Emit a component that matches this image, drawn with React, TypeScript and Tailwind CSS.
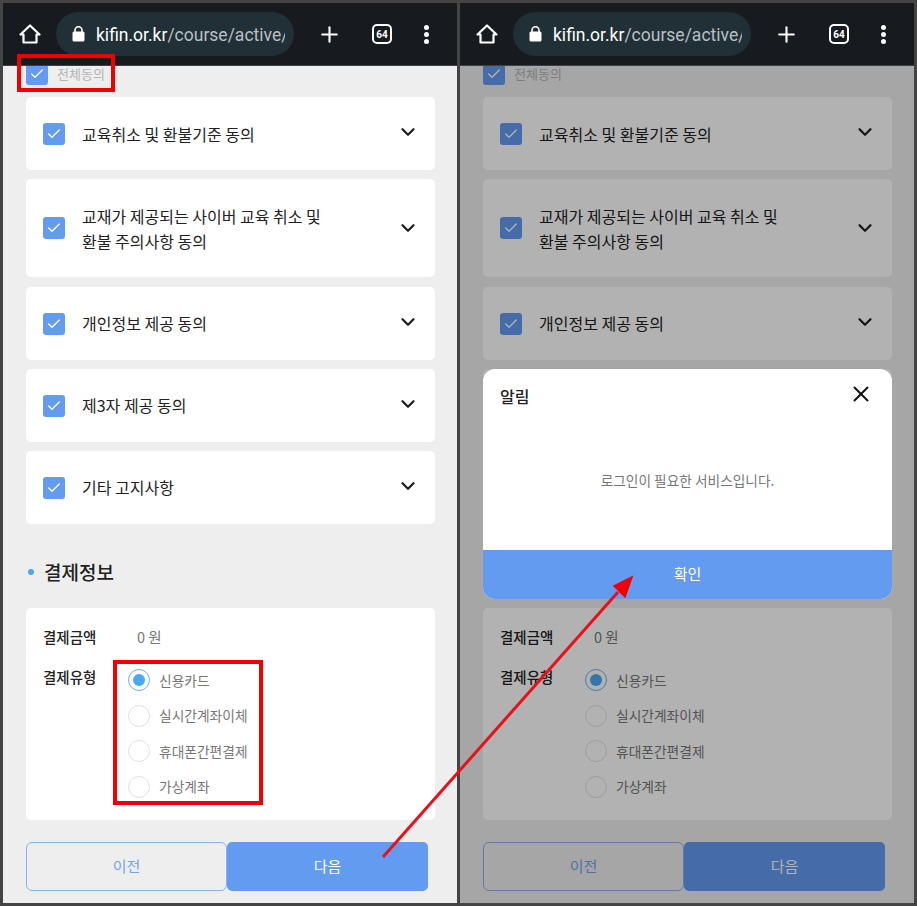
import { Check, ChevronDown, Plus, X } from 'lucide-react';

const terms = [
  { label: ['교육취소 및 환불기준 동의'], h: 'h-[73px]', textTop: 'mt-[2px]' },
  { label: ['교재가 제공되는 사이버 교육 취소 및', '환불 주의사항 동의'], h: 'h-[98px] mb-[1px]', textTop: 'mt-[2px]' },
  { label: ['개인정보 제공 동의'], h: 'h-[73px]', textTop: 'mt-0' },
  { label: ['제3자 제공 동의'], h: 'h-[73px]', textTop: 'mt-0' },
  { label: ['기타 고지사항'], h: 'h-[73px]', textTop: 'mt-0' },
];

const payTypes = ['신용카드', '실시간계좌이체', '휴대폰간편결제', '가상계좌'];

const CheckBox = () => (
  <div className="w-[22px] h-[22px] rounded-[3px] bg-[#639bf1] flex items-center justify-center shrink-0">
    <Check size={16} strokeWidth={2} className="text-white" />
  </div>
);

const TopBar = () => (
  <div className="h-[63px] shrink-0 bg-[#171b20] border-b border-[#3c4045] flex items-center pl-[16px] relative z-20">
    <svg width="22" height="22" viewBox="0 0 22 22" fill="none" stroke="#fff" strokeWidth="2.2" strokeLinejoin="round" className="shrink-0">
      <path d="M1.5 11.5 11 2.5l9.5 9H17.5v8h-13v-8z" />
    </svg>
    <div className="ml-[15px] w-[238px] h-[44px] rounded-full bg-[#212f37] flex items-center pl-[16px] pr-[9px] overflow-hidden shrink-0">
      <svg width="13" height="16" viewBox="0 0 13 16" className="shrink-0">
        <path d="M3 6V4.2a3.5 3.5 0 0 1 7 0V6" fill="none" stroke="#fff" strokeWidth="1.6" />
        <rect x="0.5" y="5.5" width="12" height="10" rx="1.5" fill="#fff" />
      </svg>
      <div className="ml-[11px] mt-[2px] overflow-hidden whitespace-nowrap text-[17.5px] font-['Roboto',sans-serif] text-[#b9c0c4]">
        <span className="text-white">kifin.or.kr</span>/course/active/
      </div>
    </div>
    <Plus size={25} strokeWidth={2} className="text-white ml-[23px] shrink-0" />
    <div className="ml-[30px] w-[20px] h-[20px] rounded-[5px] border-2 border-white flex items-center justify-center text-[10px] font-bold text-white font-['Roboto',sans-serif] shrink-0">
      64
    </div>
    <div className="ml-[32px] flex flex-col gap-[2px] shrink-0">
      <span className="w-[5px] h-[5px] rounded-full bg-white" />
      <span className="w-[5px] h-[5px] rounded-full bg-white" />
      <span className="w-[5px] h-[5px] rounded-full bg-white" />
    </div>
  </div>
);

const Phone = ({ dimmed }: { dimmed?: boolean }) => (
  <div className="relative w-[454px] h-[900px] bg-[#eeeeee] flex flex-col overflow-hidden font-['Noto_Sans_CJK_KR',sans-serif]">
    <TopBar />

    <div className="flex-1 px-[23px] flex flex-col">
      <div className="h-[32px] -mt-[1px] flex items-start overflow-hidden">
        <div className="-mt-[2px] flex items-center gap-[9px]">
          <CheckBox />
          <span className="text-[13px] text-[#b5b5b5]">전체동의</span>
        </div>
      </div>

      <div className="w-[409px] flex flex-col gap-[9px]">
        {terms.map((t) => (
          <div key={t.label[0]} className={`${t.h} bg-white rounded-[5px] flex items-center pl-[17px] pr-[16px]`}>
            <CheckBox />
            <div className={`ml-[17px] ${t.textTop} flex-1 text-[16px] leading-[25px] text-[#222222]`}>
              {t.label.map((line) => (
                <div key={line}>{line}</div>
              ))}
            </div>
            <ChevronDown
              size={22}
              strokeWidth={2.4}
              className={t.label.length > 1 ? 'text-[#1c1c1c] mt-0' : 'text-[#1c1c1c] -mt-[3px]'}
            />
          </div>
        ))}
      </div>

      <div className="mt-[36px] h-[24px] flex items-center">
        <span className="w-[6px] h-[6px] rounded-full bg-[#4aa8f5] ml-[2px]" />
        <span className="ml-[10px] text-[19px] font-medium text-[#222222]">결제정보</span>
      </div>

      <div className="mt-[24px] w-[409px] h-[212px] bg-white rounded-[5px] pl-[17px] pt-[17px]">
        <div className="flex items-center h-[24px] text-[14.5px]">
          <span className="w-[94px] font-medium text-[#222222]">결제금액</span>
          <span className="text-[#777777]">0 원</span>
        </div>
        <div className="flex mt-[16px]">
          <span className="w-[85px] text-[14.5px] leading-[24px] font-medium text-[#222222] shrink-0">결제유형</span>
          <div className="flex flex-col gap-[13.5px] mt-[4px]">
            {payTypes.map((p, i) => (
              <div key={p} className="flex items-center gap-[9px]">
                <div
                  className={`w-[22px] h-[22px] rounded-full border bg-white flex items-center justify-center ${
                    i === 0 ? 'border-[#6db0ee]' : 'border-[#e2e2e2]'
                  }`}
                >
                  {i === 0 && <span className="w-[12px] h-[12px] rounded-full bg-[#4aa8f5]" />}
                </div>
                <span className="text-[13.75px] text-[#777777]">{p}</span>
              </div>
            ))}
          </div>
        </div>
      </div>

      <div className="mt-[22px] flex">
        <div className="w-[201px] h-[49px] rounded-[6px] border border-[#8bb0ea] flex items-center justify-center text-[15px] text-[#6fa5ea]">
          이전
        </div>
        <div className="w-[201px] h-[49px] rounded-[5px] bg-[#639bf1] flex items-center justify-center text-[15px] text-white">
          다음
        </div>
      </div>
    </div>

    {dimmed && (
      <div className="absolute inset-0 top-[63px] bg-black/30 z-10">
        <div className="absolute left-[23px] top-[303px] w-[409px] h-[230px] bg-white rounded-[12px] overflow-hidden flex flex-col">
          <div className="flex items-start justify-between pl-[17px] pr-[18px] pt-[15px]">
            <span className="text-[16px] font-medium text-[#222222]">알림</span>
            <X size={26} strokeWidth={1.8} className="text-[#111111] -mt-[3px]" />
          </div>
          <div className="flex-1 flex items-center justify-center text-[13.7px] text-[#777777] mt-[2px]">
            로그인이 필요한 서비스입니다.
          </div>
          <div className="h-[49px] bg-[#639bf1] flex items-center justify-center text-[15px] text-white">확인</div>
        </div>
      </div>
    )}
  </div>
);

const App = () => (
  <div className="relative w-[917px] h-[906px] bg-[#444444] p-[3px] flex gap-[3px] overflow-hidden">
    <Phone />
    <Phone dimmed />

    {/* red annotations */}
    <div className="absolute left-[17px] top-[54px] w-[98px] h-[38px] border-[4px] border-[#f00000] z-30" />
    <div className="absolute left-[113px] top-[660px] w-[150px] h-[145px] border-[4px] border-[#f00000] z-30" />
    <svg width="917" height="906" viewBox="0 0 917 906" className="absolute left-0 top-0 z-30 pointer-events-none">
      <path d="M383 857 618 592" stroke="#e8101a" strokeWidth="3" fill="none" />
      <path d="M632 577 614 586 625 597z" fill="#f00000" stroke="#f00000" strokeWidth="1.5" />
    </svg>
  </div>
);

export default App;
